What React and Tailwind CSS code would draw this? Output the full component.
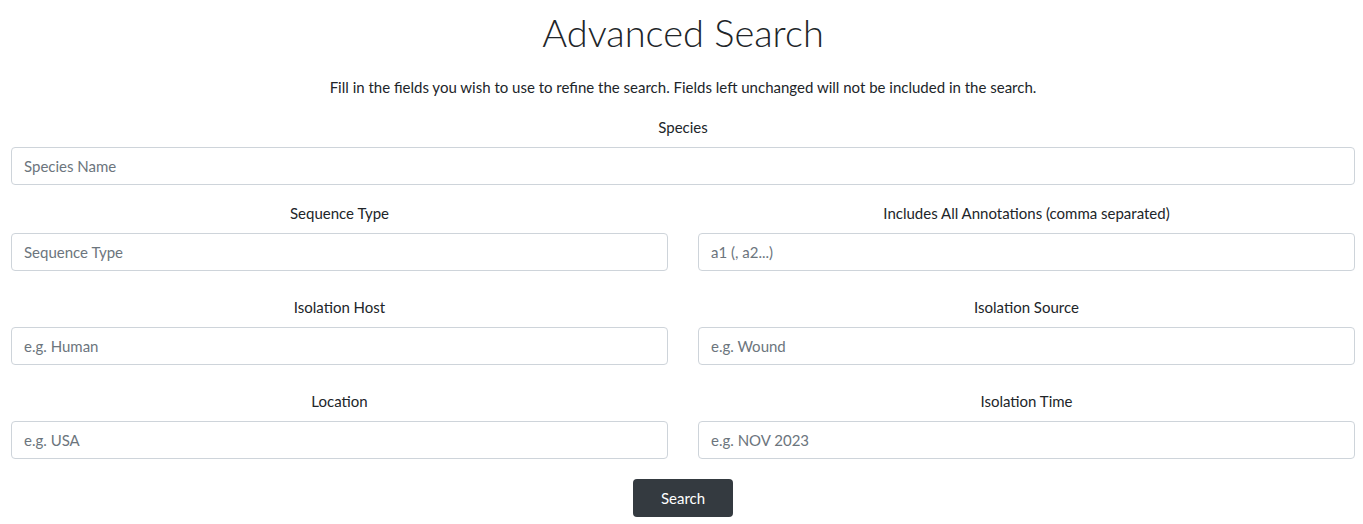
const inputCls =
  'w-full h-[38px] px-3 border border-[#ced4da] rounded-[4px] bg-white text-[15px] text-[#212529] placeholder-[#6c757d] outline-none'

function Field({ label, placeholder }) {
  return (
    <div className="flex flex-col">
      <label className="block text-center leading-[24px] mb-2">{label}</label>
      <input className={inputCls} placeholder={placeholder} />
    </div>
  )
}

export default function App() {
  return (
    <div className="min-h-screen bg-white text-[#212529] text-[15px] font-['Lato','Liberation_Sans',sans-serif] pl-[11px] pr-[8px]">
      <h1 className="text-center text-[38px] font-light leading-[47px] pt-[9px]">Advanced Search</h1>
      <p className="text-center leading-[24px] mt-[19px]">
        Fill in the fields you wish to use to refine the search. Fields left unchanged will not be included in the search.
      </p>
      <div className="mt-4">
        <Field label="Species" placeholder="Species Name" />
      </div>
      <div className="grid grid-cols-2 gap-x-[30px] gap-y-6 mt-4">
        <Field label="Sequence Type" placeholder="Sequence Type" />
        <Field label="Includes All Annotations (comma separated)" placeholder="a1 (, a2...)" />
        <Field label="Isolation Host" placeholder="e.g. Human" />
        <Field label="Isolation Source" placeholder="e.g. Wound" />
        <Field label="Location" placeholder="e.g. USA" />
        <Field label="Isolation Time" placeholder="e.g. NOV 2023" />
      </div>
      <div className="flex justify-center mt-5">
        <button className="w-[100px] h-[38px] rounded-[4px] bg-[#343a40] text-white text-[15px]">Search</button>
      </div>
    </div>
  )
}
